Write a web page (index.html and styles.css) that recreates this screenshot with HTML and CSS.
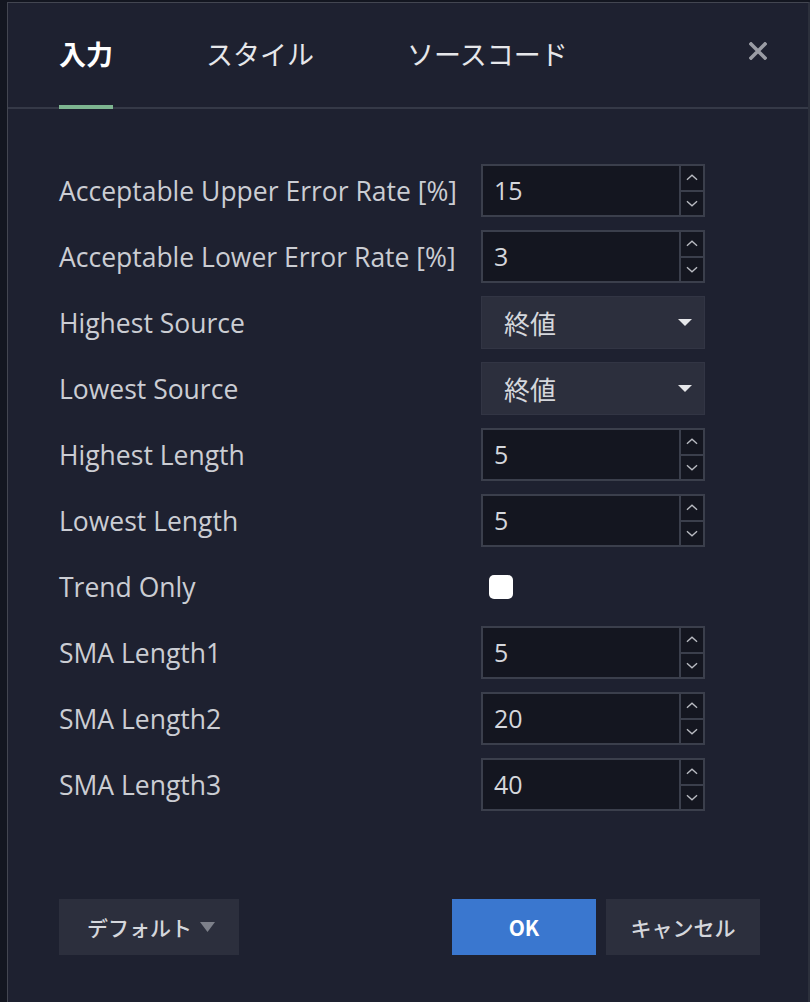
FILE: index.html
```html
<!DOCTYPE html>
<html lang="ja">
<head>
<meta charset="utf-8">
<title>Settings</title>
<link rel="stylesheet" href="styles.css">
</head>
<body>
<div class="page">
  <div class="dialog">
    <div class="header">
      <div class="tab active">入力</div>
      <div class="tab">スタイル</div>
      <div class="tab">ソースコード</div>
      <div class="close">
        <svg width="18" height="18" viewBox="0 0 18 18"><path d="M2 2L16 16M16 2L2 16" stroke="#9a9ca4" stroke-width="3.6" stroke-linecap="square"/></svg>
      </div>
    </div>
    <div class="rows">
      <div class="row"><div class="label">Acceptable Upper Error Rate [%]</div>
        <div class="num"><div class="val">15</div><div class="spin"><div class="up"><svg viewBox="0 0 12 8"><path d="M1.5 6L6 2L10.5 6"/></svg></div><div class="down"><svg viewBox="0 0 12 8"><path d="M1.5 2L6 6L10.5 2"/></svg></div></div></div></div>
      <div class="row"><div class="label">Acceptable Lower Error Rate [%]</div>
        <div class="num"><div class="val">3</div><div class="spin"><div class="up"><svg viewBox="0 0 12 8"><path d="M1.5 6L6 2L10.5 6"/></svg></div><div class="down"><svg viewBox="0 0 12 8"><path d="M1.5 2L6 6L10.5 2"/></svg></div></div></div></div>
      <div class="row"><div class="label">Highest Source</div>
        <div class="select"><span>終値</span><svg width="14" height="8" viewBox="0 0 14 8"><path d="M0 0H14L7 7Z" fill="#e6e7ea"/></svg></div></div>
      <div class="row"><div class="label">Lowest Source</div>
        <div class="select"><span>終値</span><svg width="14" height="8" viewBox="0 0 14 8"><path d="M0 0H14L7 7Z" fill="#e6e7ea"/></svg></div></div>
      <div class="row"><div class="label">Highest Length</div>
        <div class="num"><div class="val">5</div><div class="spin"><div class="up"><svg viewBox="0 0 12 8"><path d="M1.5 6L6 2L10.5 6"/></svg></div><div class="down"><svg viewBox="0 0 12 8"><path d="M1.5 2L6 6L10.5 2"/></svg></div></div></div></div>
      <div class="row"><div class="label">Lowest Length</div>
        <div class="num"><div class="val">5</div><div class="spin"><div class="up"><svg viewBox="0 0 12 8"><path d="M1.5 6L6 2L10.5 6"/></svg></div><div class="down"><svg viewBox="0 0 12 8"><path d="M1.5 2L6 6L10.5 2"/></svg></div></div></div></div>
      <div class="row"><div class="label">Trend Only</div>
        <div class="checkwrap"><div class="check"></div></div></div>
      <div class="row"><div class="label">SMA Length1</div>
        <div class="num"><div class="val">5</div><div class="spin"><div class="up"><svg viewBox="0 0 12 8"><path d="M1.5 6L6 2L10.5 6"/></svg></div><div class="down"><svg viewBox="0 0 12 8"><path d="M1.5 2L6 6L10.5 2"/></svg></div></div></div></div>
      <div class="row"><div class="label">SMA Length2</div>
        <div class="num"><div class="val">20</div><div class="spin"><div class="up"><svg viewBox="0 0 12 8"><path d="M1.5 6L6 2L10.5 6"/></svg></div><div class="down"><svg viewBox="0 0 12 8"><path d="M1.5 2L6 6L10.5 2"/></svg></div></div></div></div>
      <div class="row"><div class="label">SMA Length3</div>
        <div class="num"><div class="val">40</div><div class="spin"><div class="up"><svg viewBox="0 0 12 8"><path d="M1.5 6L6 2L10.5 6"/></svg></div><div class="down"><svg viewBox="0 0 12 8"><path d="M1.5 2L6 6L10.5 2"/></svg></div></div></div></div>
    </div>
    <div class="footer">
      <div class="btn default">デフォルト <svg width="15" height="10" viewBox="0 0 15 10"><path d="M0 0H15L7.5 10Z" fill="#7d808a"/></svg></div>
      <div class="spacer"></div>
      <div class="btn ok">OK</div>
      <div class="btn cancel">キャンセル</div>
    </div>
  </div>
</div>
</body>
</html>
```
FILE: styles.css
```css
* { box-sizing: border-box; }
html, body { margin: 0; padding: 0; height: 100%; }
body {
  background: #131620;
  font-family: "Open Sans", "Noto Sans CJK JP", sans-serif;
  overflow: hidden;
}
.page {
  height: 1002px;
  padding: 2px 0 0 7px;
}
.dialog {
  height: 1000px;
  width: 803px;
  background: #1e2130;
  border: 1px solid #434651;
  border-bottom: none;
  border-right: 2px solid #2c303c;
  display: flex;
  flex-direction: column;
}
.header {
  height: 106px;
  display: flex;
  align-items: flex-end;
  padding-left: 51px;
  border-bottom: 2px solid #353947;
  position: relative;
}
.tab {
  font-family: "Noto Sans CJK JP", sans-serif;
  font-size: 27px;
  line-height: 38px;
  color: #e6e7ea;
  margin-right: 93px;
  padding-bottom: 32px;
  border-bottom: 4px solid transparent;
  margin-bottom: -2px;
}
.tab.active {
  font-weight: 700;
  color: #ffffff;
  border-bottom-color: #7db590;
}
.close {
  position: absolute;
  right: 41px;
  top: 39px;
  width: 18px;
  height: 18px;
}
.close svg { display: block; }
.rows {
  padding: 55px 0 0 51px;
  display: flex;
  flex-direction: column;
  gap: 13px;
}
.row {
  display: flex;
  align-items: center;
  height: 53px;
}
.label {
  width: 422px;
  font-size: 26.5px;
  color: #cbcdd3;
  white-space: nowrap;
}
.num {
  width: 224px;
  height: 53px;
  background: #141620;
  border: 2px solid #3b3f4c;
  display: flex;
}
.val {
  flex: 1;
  font-size: 25px;
  line-height: 49px;
  color: #d5d7dc;
  padding-left: 11px;
}
.spin {
  width: 24px;
  border-left: 2px solid #3b3f4c;
  display: flex;
  flex-direction: column;
}
.spin > div {
  flex: 1;
  display: flex;
  align-items: center;
  justify-content: center;
}
.spin .up { border-bottom: 2px solid #3b3f4c; }
.spin svg {
  width: 14px;
  height: 9px;
  fill: none;
  stroke: #b9bbc2;
  stroke-width: 1.2;
}
.select {
  width: 224px;
  height: 53px;
  background: #2c2f3d;
  border: 1px solid #323544;
  display: flex;
  align-items: center;
  justify-content: space-between;
  padding: 0 12px 0 22px;
  font-family: "Noto Sans CJK JP", sans-serif;
  font-size: 26px;
  color: #d5d7dc;
}
.checkwrap {
  width: 224px;
  padding-left: 8px;
}
.check {
  width: 24px;
  height: 24px;
  border-radius: 5px;
  background: #ffffff;
}
.footer {
  margin-top: auto;
  margin-bottom: 47px;
  display: flex;
  padding: 0 48px 0 51px;
  gap: 10px;
}
.spacer { flex: 1; }
.btn {
  height: 56px;
  display: flex;
  align-items: center;
  justify-content: center;
  font-family: "Noto Sans CJK JP", sans-serif;
  font-size: 21px;
  font-weight: 500;
  color: #d5d7dc;
}
.default {
  width: 180px;
  background: #2c2f3d;
  gap: 8px;
  padding-left: 4px;
}
.ok {
  width: 144px;
  background: #3a77cf;
  color: #ffffff;
  font-weight: 700;
}
.cancel {
  width: 154px;
  background: #2c2f3d;
}
```
